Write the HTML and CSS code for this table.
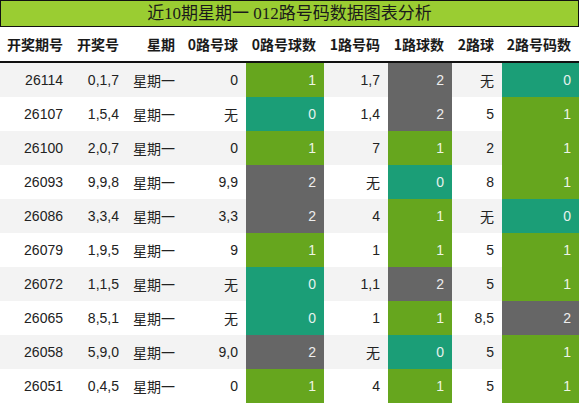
FILE: index.html
```html
<!DOCTYPE html>
<html lang="zh">
<head>
<meta charset="utf-8">
<link rel="stylesheet" href="styles.css">
</head>
<body>
<div class="wrap">
  <div class="title">近10期星期一 012路号码数据图表分析</div>
  <table class="grid">
    <colgroup>
      <col class="c1"><col class="c2"><col class="c3"><col class="c4"><col class="c5"><col class="c6"><col class="c7"><col class="c8"><col class="c9">
    </colgroup>
    <thead>
      <tr><th>开奖期号</th><th>开奖号</th><th>星期</th><th>0路号球</th><th>0路号球数</th><th>1路号码</th><th>1路球数</th><th>2路球</th><th>2路号码数</th></tr>
    </thead>
    <tbody>
      <tr><td>26114</td><td>0,1,7</td><td>星期一</td><td>0</td><td class="k1">1</td><td>1,7</td><td class="k2">2</td><td>无</td><td class="k0">0</td></tr>
      <tr><td>26107</td><td>1,5,4</td><td>星期一</td><td>无</td><td class="k0">0</td><td>1,4</td><td class="k2">2</td><td>5</td><td class="k1">1</td></tr>
      <tr><td>26100</td><td>2,0,7</td><td>星期一</td><td>0</td><td class="k1">1</td><td>7</td><td class="k1">1</td><td>2</td><td class="k1">1</td></tr>
      <tr><td>26093</td><td>9,9,8</td><td>星期一</td><td>9,9</td><td class="k2">2</td><td>无</td><td class="k0">0</td><td>8</td><td class="k1">1</td></tr>
      <tr><td>26086</td><td>3,3,4</td><td>星期一</td><td>3,3</td><td class="k2">2</td><td>4</td><td class="k1">1</td><td>无</td><td class="k0">0</td></tr>
      <tr><td>26079</td><td>1,9,5</td><td>星期一</td><td>9</td><td class="k1">1</td><td>1</td><td class="k1">1</td><td>5</td><td class="k1">1</td></tr>
      <tr><td>26072</td><td>1,1,5</td><td>星期一</td><td>无</td><td class="k0">0</td><td>1,1</td><td class="k2">2</td><td>5</td><td class="k1">1</td></tr>
      <tr><td>26065</td><td>8,5,1</td><td>星期一</td><td>无</td><td class="k0">0</td><td>1</td><td class="k1">1</td><td>8,5</td><td class="k2">2</td></tr>
      <tr><td>26058</td><td>5,9,0</td><td>星期一</td><td>9,0</td><td class="k2">2</td><td>无</td><td class="k0">0</td><td>5</td><td class="k1">1</td></tr>
      <tr><td>26051</td><td>0,4,5</td><td>星期一</td><td>0</td><td class="k1">1</td><td>4</td><td class="k1">1</td><td>5</td><td class="k1">1</td></tr>
    </tbody>
  </table>
</div>
</body>
</html>
```

FILE: styles.css
```css
html, body {
  margin: 0;
  padding: 0;
  background: #ffffff;
}
.wrap {
  width: 579px;
}
.title {
  box-sizing: border-box;
  height: 27px;
  border: 1px solid #111;
  background: #9acd32;
  color: #1a1a1a;
  font-family: "Liberation Serif", "Noto Sans CJK SC", serif;
  font-size: 17px;
  line-height: 25px;
  text-align: center;
}
.grid {
  width: 579px;
  border-collapse: collapse;
  table-layout: fixed;
  font-family: "Liberation Sans", "Noto Sans CJK SC", sans-serif;
  font-size: 14px;
  color: #222;
}
.c1 { width: 71px; }
.c2 { width: 56px; }
.c3 { width: 56px; }
.c4 { width: 63px; }
.c5 { width: 78px; }
.c6 { width: 64px; }
.c7 { width: 64px; }
.c8 { width: 50px; }
.c9 { width: 77px; }
.grid th {
  height: 34px;
  padding: 0 8px 0 0;
  text-align: right;
  font-weight: bold;
  font-family: "Noto Sans CJK SC", sans-serif;
  font-size: 14px;
  color: #1a1a1a;
  border-bottom: 2px solid #111;
  white-space: nowrap;
}
.grid td {
  height: 34px;
  padding: 0 8px 0 0;
  text-align: right;
  white-space: nowrap;
}
.grid tbody tr:nth-child(odd) {
  background: #f3f3f3;
}
.grid td.k0 { background: #1b9e77; color: #e6f2ee; }
.grid td.k1 { background: #66a61e; color: #eef5e6; }
.grid td.k2 { background: #666666; color: #eeeeee; }
```
